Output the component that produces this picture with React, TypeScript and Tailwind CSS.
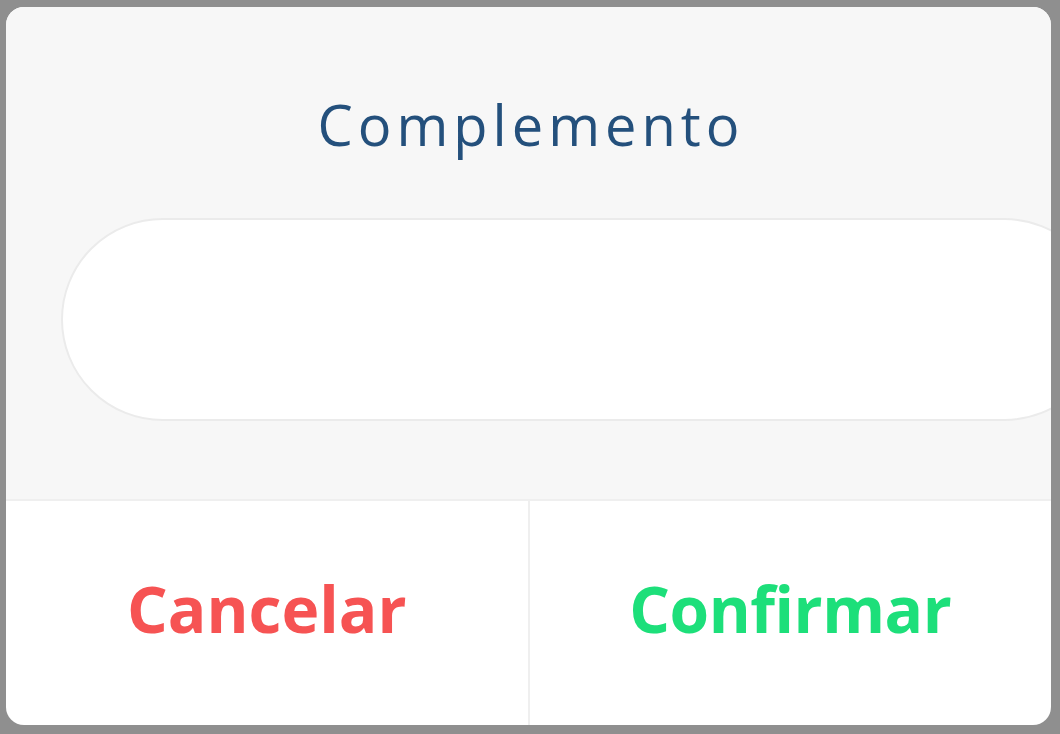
export default function App() {
  return (
    <div className="min-h-[734px] w-full bg-[#8f8f8f] pt-[7px] pl-[6px] pr-[9px] pb-[9px]">
      <div className="flex h-[718px] flex-col overflow-hidden rounded-[18px] bg-white font-['Open_Sans','Lato',sans-serif]">
        {/* Body */}
        <div className="flex h-[492px] flex-col bg-[#f7f7f7]">
          <h1 className="mt-[82px] pl-[5px] text-center text-[56px] leading-[70px] font-normal tracking-[5px] text-[#24507c]">
            Complemento
          </h1>
          <div className="mt-[59px] ml-[55px] h-[203px] w-full shrink-0 rounded-full border-2 border-[#ebebeb] bg-white" />
        </div>

        {/* Actions */}
        <div className="flex flex-1 border-t-2 border-[#efefef]">
          <button className="flex-1 pb-[8px] text-[64px] font-bold text-[#f65353]">Cancelar</button>
          <div className="w-[2px] bg-[#efefef]" />
          <button className="flex-1 pb-[8px] text-[64px] font-bold tracking-[-0.5px] text-[#1ddf7a]">Confirmar</button>
        </div>
      </div>
    </div>
  );
}
